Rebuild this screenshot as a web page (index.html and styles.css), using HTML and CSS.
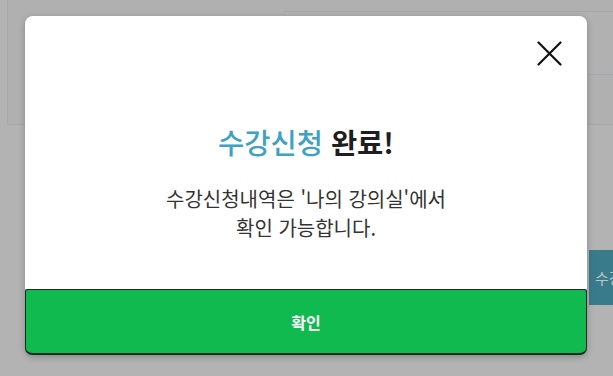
FILE: index.html
```html
<!DOCTYPE html>
<html lang="ko">
<head>
<meta charset="utf-8">
<link rel="stylesheet" href="styles.css">
</head>
<body>
<div class="page">
  <div class="panel">
    <div class="panel-head"></div>
  </div>
  <div class="side-btn">수강신청</div>
</div>
<div class="modal">
  <div class="modal-body">
    <div class="close-row">
      <svg class="close" width="25" height="25" viewBox="0 0 25 25"><path d="M1.5 1.5 L23.5 23.5 M23.5 1.5 L1.5 23.5" stroke="#111" stroke-width="2.2" stroke-linecap="round" fill="none"/></svg>
    </div>
    <h1 class="title"><span class="accent">수강신청</span> 완료!</h1>
    <p class="msg">수강신청내역은 '나의 강의실'에서<br>확인 가능합니다.</p>
  </div>
  <button class="confirm">확인</button>
</div>
</body>
</html>
```
FILE: styles.css
```css
html, body {
  margin: 0;
  padding: 0;
  width: 613px;
  height: 376px;
  overflow: hidden;
  background: #b3b3b3;
  font-family: "Noto Sans CJK KR", "Noto Sans", sans-serif;
}
.page {
  position: relative;
  width: 613px;
  height: 376px;
}
.panel {
  margin-left: 7px;
  height: 125px;
  border-left: 1px solid #a9a9a9;
  border-bottom: 1px solid #a9a9a9;
  background: #b0b0b0;
  box-sizing: border-box;
  padding-top: 11px;
  padding-left: 276px;
}
.panel-head {
  height: 62px;
  border-top: 1px solid #a6a6a6;
  border-left: 1px solid #a9a9a9;
  border-bottom: 1px solid #a4aaae;
  background: #b1b1b1;
}
.side-btn {
  position: absolute;
  left: 589px;
  top: 250px;
  width: 24px;
  height: 55px;
  background: #3a7b8b;
  color: #b8c4c8;
  font-size: 15px;
  line-height: 55px;
  padding-left: 6px;
  box-sizing: border-box;
  white-space: nowrap;
  overflow: hidden;
}
.modal {
  position: absolute;
  left: 25px;
  top: 16px;
  width: 562px;
  display: flex;
  flex-direction: column;
  box-shadow: 0 2px 6px rgba(0,0,0,0.25);
  border-radius: 8px;
}
.modal-body {
  background: #fff;
  border-radius: 8px 8px 0 0;
  height: 273px;
  box-sizing: border-box;
  padding: 25px 25px 0;
  display: flex;
  flex-direction: column;
  align-items: center;
}
.close-row {
  align-self: stretch;
  display: flex;
  justify-content: flex-end;
  height: 25px;
}
.close { display: block; }
.title {
  margin: 56px 0 0;
  font-size: 28.5px;
  line-height: 40px;
  font-weight: 700;
  color: #1e1e1e;
  text-align: center;
}
.accent { color: #3ea2c2; font-weight: 500; }
.msg {
  margin: 22px 0 0;
  font-size: 20px;
  line-height: 29px;
  color: #333;
  text-align: center;
}
.confirm {
  height: 66px;
  margin: 0;
  border: 1px solid #1c2a22;
  border-bottom-width: 2px;
  border-radius: 3px 3px 7px 7px;
  background: #10ba4f;
  color: #fff;
  font-family: "Noto Sans CJK KR", "Noto Sans", sans-serif;
  font-size: 16px;
  font-weight: 700;
  cursor: pointer;
}
```
